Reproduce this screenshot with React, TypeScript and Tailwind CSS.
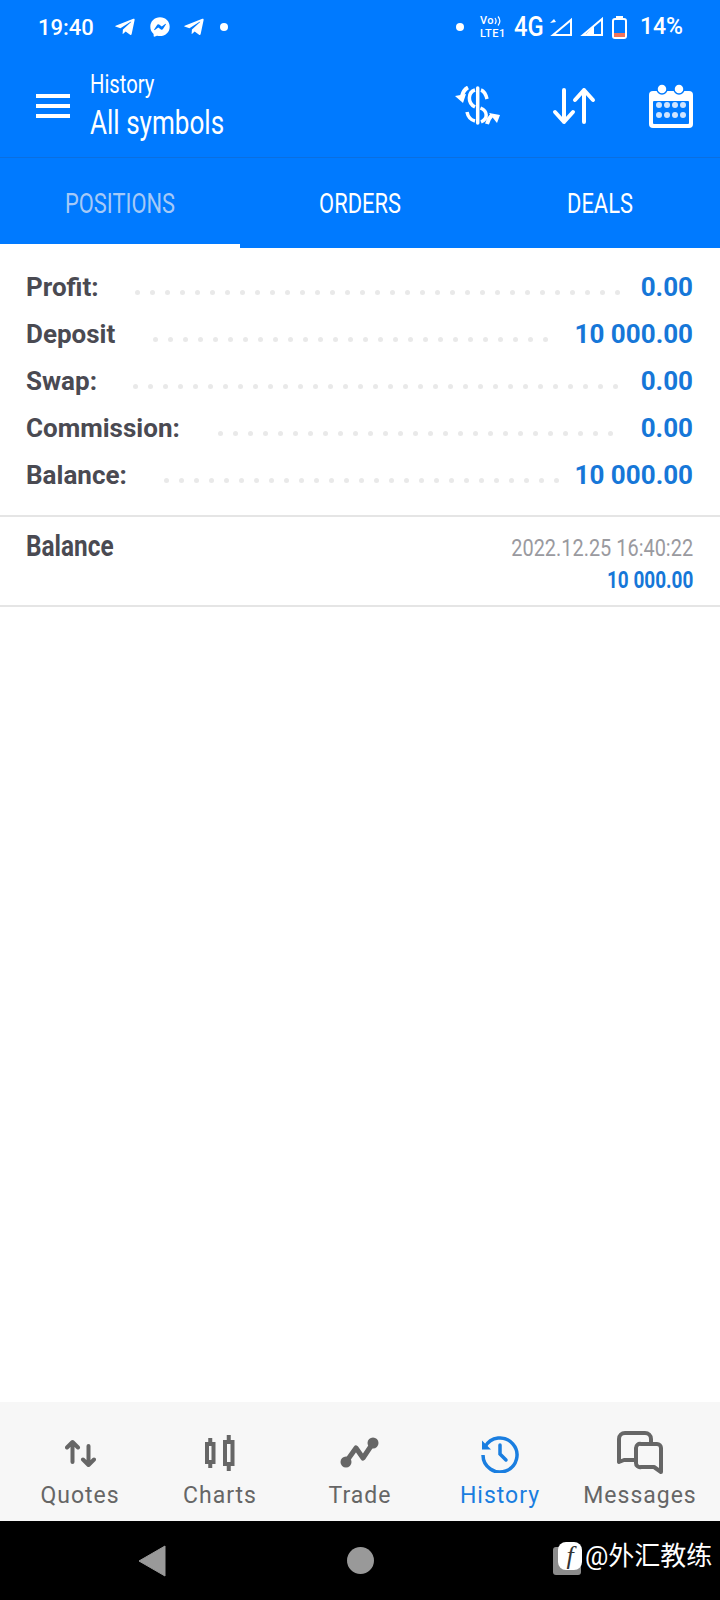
import { FaTelegramPlane, FaFacebookMessenger } from 'react-icons/fa'

const summary = [
  { label: 'Profit:', value: '0.00', dots: 33, gap: 'mr-[21px]' },
  { label: 'Deposit', value: '10 000.00', dots: 27, gap: 'mr-[27px]' },
  { label: 'Swap:', value: '0.00', dots: 33, gap: 'mr-[23px]' },
  { label: 'Commission:', value: '0.00', dots: 27, gap: 'mr-[28px]' },
  { label: 'Balance:', value: '10 000.00', dots: 27, gap: 'mr-[16px]' }
]

function ExchangeIcon() {
  return (
    <svg width="48" height="40" viewBox="0 0 48 40" fill="none" stroke="#fff" strokeWidth="3.500">
      <path d="M23.700 2v35" strokeLinecap="round" />
      <path d="M21 4C14 6 13 17 21 21" />
      <path d="M27 4c3 1 5 5 6 9" />
      <path d="M26.500 22c7.500 3 7.500 11 .5 14" />
      <path d="M13 26c1 5 4 8 8 9" />
      <path d="M14 1.500C11 3 9 6 8 10" strokeWidth="4" />
      <path d="M1 10l11-2-3 9z" fill="#fff" stroke="none" />
      <path d="M33 38c1-4 3-7 5-9" strokeWidth="4" />
      <path d="M35 27l11 2-3 8z" fill="#fff" stroke="none" />
    </svg>
  )
}

function SortIcon() {
  return (
    <svg width="44" height="38" viewBox="0 0 44 38" fill="none" stroke="#fff" strokeWidth="4" strokeLinecap="round" strokeLinejoin="round">
      <path d="M12 3v32M3 25l9 10 9-10" />
      <path d="M32 35V3M23 13l9-10 9 10" />
    </svg>
  )
}

function CalendarIcon() {
  return (
    <svg width="44" height="44" viewBox="0 0 44 44">
      <rect x="0" y="7" width="44" height="37" rx="4" fill="#fff" />
      <rect x="4" y="17" width="36" height="23" rx="1" fill="#007aff" />
      <circle cx="13" cy="5" r="5" fill="#fff" stroke="#007aff" strokeWidth="1.500" />
      <circle cx="30" cy="5" r="5" fill="#fff" stroke="#007aff" strokeWidth="1.500" />
      {[21, 31].map((cy) =>
        [10, 18, 26, 34].map((cx) => <circle key={`${cx}-${cy}`} cx={cx} cy={cy} r="3" fill="#cfe4ff" />)
      )}
    </svg>
  )
}

function QuotesIcon() {
  return (
    <svg width="31" height="29" viewBox="0 0 31 29" fill="none" stroke="#666" strokeWidth="4" strokeLinecap="round" strokeLinejoin="round">
      <path d="M7.500 23V3M2 8.500L7.500 3 13 8.500" />
      <path d="M23.500 7v19M18 20.500l5.500 5.500 5.500-5.500" />
    </svg>
  )
}

function ChartsIcon() {
  return (
    <svg width="30" height="36" viewBox="0 0 30 36" fill="none" stroke="#666" strokeWidth="4">
      <rect x="2" y="9" width="6.500" height="18" />
      <rect x="20" y="7" width="7.500" height="22" />
      <path d="M5.250 3v6M5.250 27v6M23.750 0v7M23.750 29v7" />
    </svg>
  )
}

function TradeIcon() {
  return (
    <svg width="40" height="32" viewBox="0 0 40 32" fill="none">
      <path d="M6 25L16 11l7 10L33 6" stroke="#666" strokeWidth="5" strokeLinejoin="round" />
      <circle cx="6" cy="25" r="5.500" fill="#666" />
      <circle cx="33" cy="6" r="5.500" fill="#666" />
    </svg>
  )
}

function HistoryIcon() {
  return (
    <svg width="40" height="40" viewBox="0 0 40 40" fill="none" stroke="#1a7ee0" strokeWidth="3.500">
      <path d="M5 14a17 17 0 1 1-2 8" />
      <path d="M2 7.500v9h9" fill="#1a7ee0" stroke="none" />
      <path d="M20 12v9l6 6" strokeLinecap="round" />
    </svg>
  )
}

function MessagesIcon() {
  return (
    <svg width="46" height="44" viewBox="0 0 46 44" fill="none" stroke="#666" strokeWidth="4" strokeLinejoin="round">
      <path d="M19 29H7l-5 2V8a6 6 0 0 1 6-6h20a6 6 0 0 1 6 6v4" />
      <path d="M24 13h16a4 4 0 0 1 4 4v24l-7-5H24a4 4 0 0 1-5-4V17a4 4 0 0 1 5-4z" />
    </svg>
  )
}

function SignalIcon({ x }: { x?: boolean }) {
  return (
    <svg width="24" height="20" viewBox="0 0 24 20" fill="none">
      {x ? (
        <>
          <path d="M22 3v15H4z" stroke="#fff" strokeWidth="2" />
          <path d="M1 6l4-4 2 3z" fill="#fff" />
        </>
      ) : (
        <>
          <path d="M22 2v16H3z" stroke="#fff" strokeWidth="2" />
          <path d="M14 9v9H5z" fill="#fff" />
        </>
      )}
    </svg>
  )
}

function VolteIcon() {
  return (
    <div className="w-[26px] flex flex-col text-[11px] leading-[13px] tracking-[0.5px] font-medium">
      <div className="flex items-center">
        <span>Vo</span>
        <svg width="8" height="12" viewBox="0 0 8 12" fill="none" stroke="#fff" strokeWidth="1.200">
          <path d="M1 3c1.500 2 1.500 4 0 6M4 1.500c2.500 3 2.500 6 0 9" />
        </svg>
      </div>
      <span className="whitespace-nowrap">LTE1</span>
    </div>
  )
}

function NavItem({ label, active, children }: { label: string; active?: boolean; children: React.ReactNode }) {
  return (
    <div className="w-[140px] flex flex-col items-center">
      <div className="h-[48px] flex items-center justify-center">{children}</div>
      <span className={`mt-[5px] text-[23px] leading-[28px] tracking-[1px] ${active ? 'text-[#1a7ee0]' : 'text-[#666666]'}`}>
        {label}
      </span>
    </div>
  )
}

export default function App() {
  return (
    <div className="w-[720px] h-[1600px] flex flex-col bg-white overflow-hidden font-['Roboto',sans-serif]">
      {/* Header */}
      <div className="bg-[#007aff] text-white">
        <div className="h-[54px] pl-[38px] pr-[37px] flex items-center justify-between">
          <div className="flex items-center">
            <span className="text-[22px] font-medium w-[76px]">19:40</span>
            <FaTelegramPlane size={22} />
            <FaFacebookMessenger size={20} className="ml-[14px]" />
            <FaTelegramPlane size={22} className="ml-[13px]" />
            <span className="ml-[15px] w-2 h-2 rounded-full bg-white" />
          </div>
          <div className="flex items-center">
            <span className="w-2 h-2 rounded-full bg-white mr-[16px]" />
            <VolteIcon />
            <span className="ml-[8px] w-[30px] text-[27px] font-medium origin-left scale-x-[0.88]">4G</span>
            <span className="ml-[5px]"><SignalIcon x /></span>
            <span className="ml-[7px]"><SignalIcon /></span>
            <div className="ml-[8px] w-[15px] flex flex-col items-center">
              <div className="w-[7px] h-[2px] bg-white" />
              <div className="w-[15px] h-[21px] border-2 border-white rounded-[3px] flex flex-col justify-end">
                <div className="h-[4px] bg-[#f0735a]" />
              </div>
            </div>
            <span className="ml-[13px] text-[23px] font-medium">14%</span>
          </div>
        </div>

        <div className="h-[104px] flex items-center border-b border-[#0a6fe0] pl-[36px] pr-[27px]">
          <div className="w-[34px] flex flex-col gap-[6px]">
            <div className="h-1 bg-white" />
            <div className="h-1 bg-white" />
            <div className="h-1 bg-white" />
          </div>
          <div className="ml-[20px] mt-[3px] flex flex-col">
            <span className="text-[25px] leading-[30px] origin-left scale-x-[0.81]">History</span>
            <span className="text-[33px] leading-[45px] origin-left scale-x-[0.79] whitespace-nowrap">All symbols</span>
          </div>
          <div className="ml-auto flex items-center">
            <ExchangeIcon />
            <span className="ml-[50px]"><SortIcon /></span>
            <span className="ml-[53px]"><CalendarIcon /></span>
          </div>
        </div>

        <div className="flex h-[90px] text-[27px]">
          <div className="w-[240px] flex flex-col">
            <div className="flex-1 flex items-center justify-center pt-[6px] text-[#a5c9f7] scale-x-[0.81]">POSITIONS</div>
            <div className="h-1 bg-white" />
          </div>
          <div className="w-[240px] flex items-center justify-center pt-[2px] scale-x-[0.81]">ORDERS</div>
          <div className="w-[240px] flex items-center justify-center pt-[2px] scale-x-[0.81]">DEALS</div>
        </div>
      </div>

      {/* Summary */}
      <div className="pt-[16px] pb-[16px] border-b-2 border-[#e5e5e5]">
        {summary.map((row) => (
          <div key={row.label} className="h-[47px] pl-[26px] pr-[27px] flex items-center">
            <span className="text-[26px] font-bold text-[#4a4a52]">{row.label}</span>
            <div className={`flex-1 flex justify-end gap-[10px] pt-[10px] overflow-hidden ${row.gap}`}>
              {Array.from({ length: row.dots }).map((_, i) => (
                <span key={i} className="w-[5px] h-[5px] shrink-0 rounded-full bg-[#e9e9e9]" />
              ))}
            </div>
            <span className="text-[26px] font-bold text-[#1677d8]">{row.value}</span>
          </div>
        ))}
      </div>

      {/* Deals */}
      <div className="h-[90px] pl-[26px] pr-[27px] flex justify-between border-b-2 border-[#e5e5e5]">
        <span className="mt-[11px] text-[29px] leading-[36px] font-bold text-[#4a4a52] origin-left scale-x-[0.84]">Balance</span>
        <div className="mt-[15px] flex flex-col items-end">
          <span className="text-[24px] leading-[33px] text-[#9a9a9f] origin-right scale-x-[0.83] whitespace-nowrap">2022.12.25 16:40:22</span>
          <span className="text-[24px] leading-[30px] font-bold text-[#1677d8] origin-right scale-x-[0.79] whitespace-nowrap">10 000.00</span>
        </div>
      </div>

      <div className="flex-1" />

      {/* Bottom navigation */}
      <div className="h-[119px] bg-[#f7f7f7] flex pl-[10px] pt-[27px] text-[#666666]">
        <NavItem label="Quotes"><QuotesIcon /></NavItem>
        <NavItem label="Charts"><ChartsIcon /></NavItem>
        <NavItem label="Trade"><TradeIcon /></NavItem>
        <NavItem label="History" active><HistoryIcon /></NavItem>
        <NavItem label="Messages"><MessagesIcon /></NavItem>
      </div>

      {/* System bar */}
      <div className="h-[79px] bg-black flex items-center relative">
        <svg width="28" height="32" viewBox="0 0 28 32" className="ml-[138px]">
          <path d="M27 1v30L1 16z" fill="#999" stroke="#999" strokeLinejoin="round" />
        </svg>
        <span className="ml-[181px] w-[27px] h-[27px] rounded-full bg-[#999999]" />
        <div className="absolute left-[553px] top-[22px] flex items-center">
          <span className="absolute left-0 top-[4px] w-[28px] h-[28px] rounded-[3px] bg-[#8c8c8c]" />
          <span className="relative ml-[5px] -mt-[4px] w-[24px] h-[28px] rounded-[8px] bg-white text-[#333333] italic text-[26px] leading-[28px] text-center font-['Liberation_Serif',serif]">f</span>
          <span className="relative ml-[3px] -mt-[3px] text-[26px] leading-[32px] text-white font-['Roboto','Noto_Sans_CJK_SC',sans-serif]">@外汇教练</span>
        </div>
      </div>
    </div>
  )
}
